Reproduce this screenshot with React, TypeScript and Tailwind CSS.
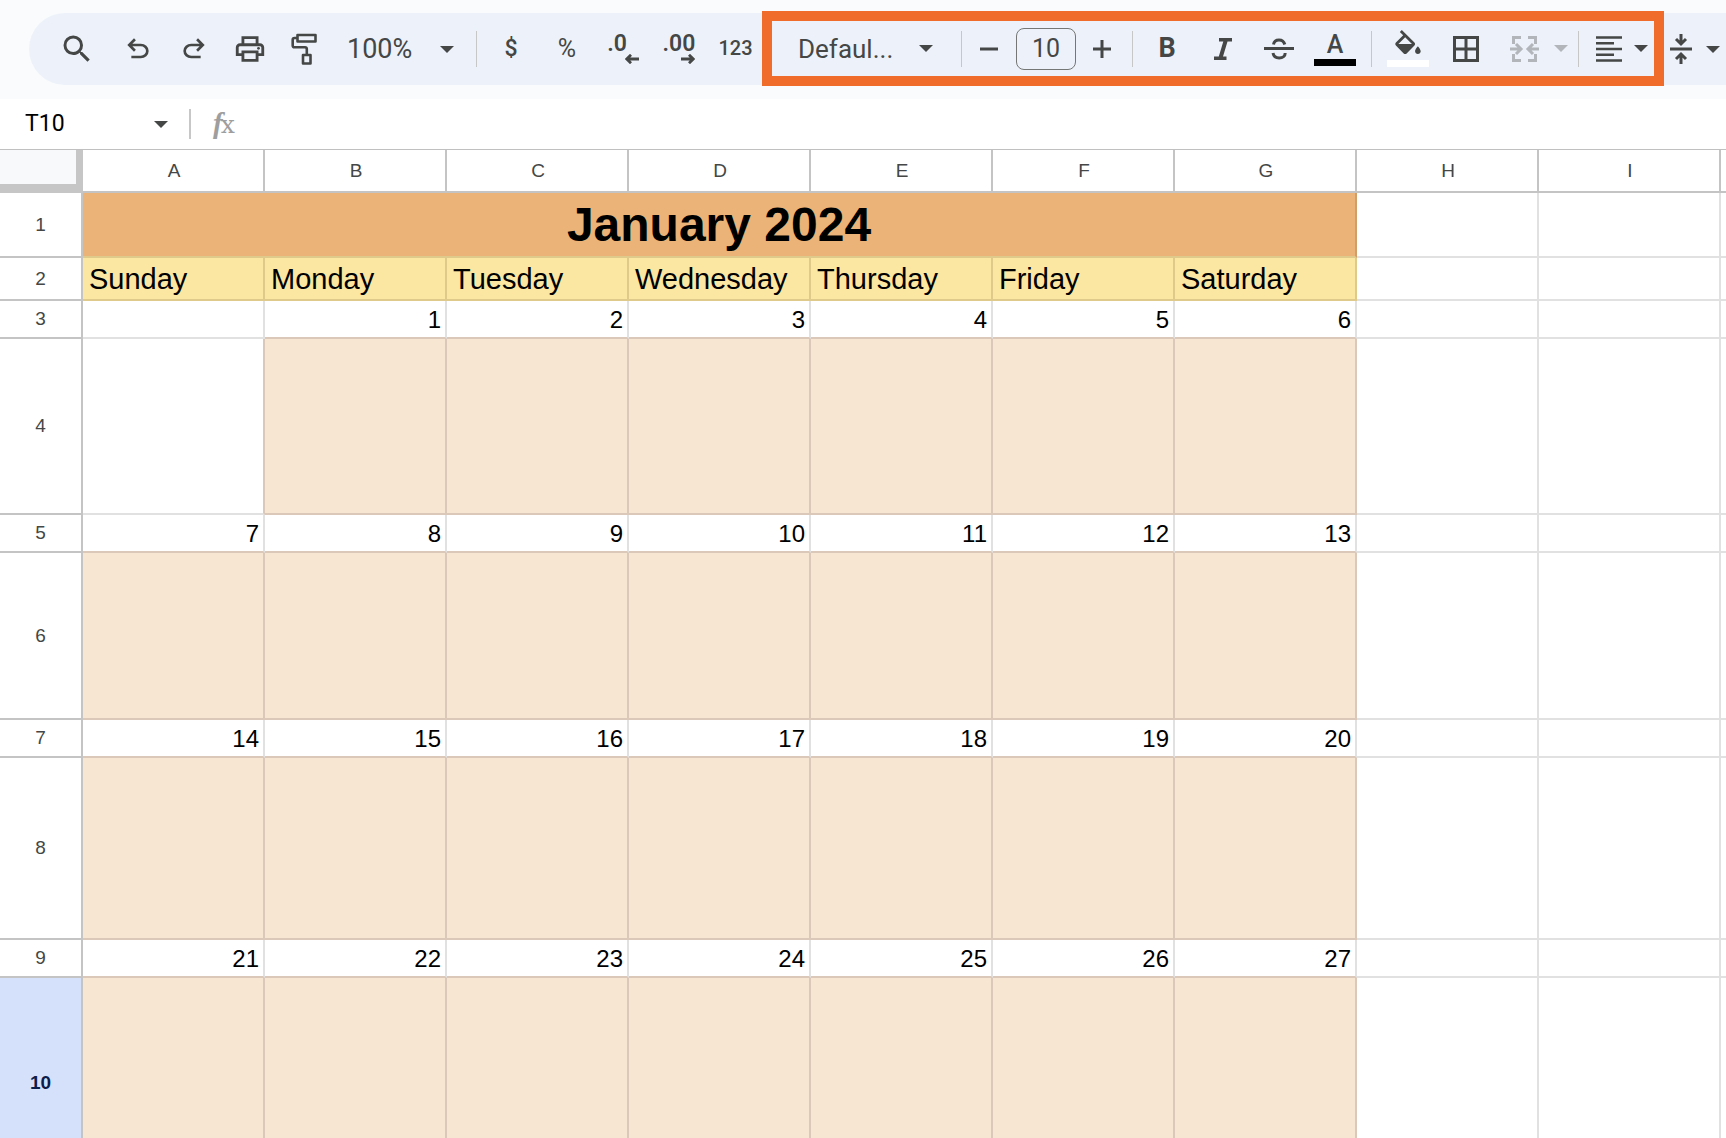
import type { ReactNode } from "react";
import clsx from "clsx";
import { MdSearch, MdOutlinePrint } from "react-icons/md";

const COLUMNS = ["A", "B", "C", "D", "E", "F", "G", "H", "I"];
const DAYS = ["Sunday", "Monday", "Tuesday", "Wednesday", "Thursday", "Friday", "Saturday"];

type Row = {
  id: number;
  height: string;
  firstDay?: number; // number shown in column A, below 1 is left empty
  filled?: boolean;
  startCol?: number;
};

const ROWS: Row[] = [
  { id: 3, height: "h-[38px]", firstDay: 0 },
  { id: 4, height: "h-[176px]", filled: true, startCol: 1 },
  { id: 5, height: "h-[38px]", firstDay: 7 },
  { id: 6, height: "h-[167px]", filled: true },
  { id: 7, height: "h-[38px]", firstDay: 14 },
  { id: 8, height: "h-[182px]", filled: true },
  { id: 9, height: "h-[38px]", firstDay: 21 },
  { id: 10, height: "h-[212px]", filled: true },
];

function Caret({ className }: { className?: string }) {
  return (
    <svg width="14" height="7" viewBox="0 0 14 7" className={clsx("shrink-0", className)}>
      <path d="M0 0h14L7 7z" fill="currentColor" />
    </svg>
  );
}

function Divider({ className }: { className?: string }) {
  return <div className={clsx("h-9 w-px shrink-0 bg-[#c7c7c7]", className)} />;
}

function ToolButton({ label, className = "w-14", children }: { label: string; className?: string; children: ReactNode }) {
  return (
    <button
      type="button"
      aria-label={label}
      className={clsx("flex h-14 shrink-0 items-center justify-center", className)}
    >
      {children}
    </button>
  );
}

function UndoIcon({ className }: { className?: string }) {
  return (
    <svg width="32" height="32" viewBox="0 0 24 24" fill="currentColor" className={className}>
      <path d="M7 19v-2h7.1q1.575 0 2.738-1T18 13.5T16.838 11T14.1 10H7.8l2.6 2.6L9 14L4 9l5-5l1.4 1.4L7.8 8h6.3q2.425 0 4.163 1.575T20 13.5t-1.737 3.925T14.1 19z" />
    </svg>
  );
}

function PaintIcon() {
  return (
    <svg width="26" height="32" viewBox="0 0 26 32" fill="none" stroke="currentColor" strokeWidth="2.6" strokeLinejoin="round">
      <rect x="6.5" y="2" width="18" height="6.5" />
      <path d="M6.5 5H3.5q-1.800 0-1.800 1.800V12.500q0 1.800 1.800 1.800H14q1.800 0 1.800 1.800V22" />
      <rect x="12" y="22" width="7.5" height="8.5" />
    </svg>
  );
}

function DecimalArrow({ right }: { right?: boolean }) {
  return (
    <svg width="14" height="10" viewBox="0 0 14 10" fill="none" stroke="currentColor" strokeWidth="2.8">
      {right ? <path d="M0 5h12M8 .8 12.2 5 8 9.2" /> : <path d="M14 5H2M6 .8 1.800 5 6 9.2" />}
    </svg>
  );
}

function Toolbar() {
  return (
    <div className="flex h-[99px] overflow-hidden bg-[#f9fbfd] pt-[13px] pl-[29px]">
      <div className="flex h-[72px] flex-1 items-center rounded-l-full bg-[#edf2fa] pl-5 font-[Roboto,sans-serif] text-[#444746]">
        <ToolButton label="Search" className="mr-[5px] w-14">
          <MdSearch size={36} />
        </ToolButton>
        <ToolButton label="Undo">
          <UndoIcon />
        </ToolButton>
        <ToolButton label="Redo">
          <UndoIcon className="-scale-x-100" />
        </ToolButton>
        <ToolButton label="Print">
          <MdOutlinePrint size={34} />
        </ToolButton>
        <ToolButton label="Paint format" className="w-14 pr-1">
          <PaintIcon />
        </ToolButton>

        <div className="relative flex w-[142px] shrink-0 items-center pl-[13px]">
          <select aria-label="Zoom" className="w-full appearance-none text-[27px] leading-8 outline-none">
            <option>100%</option>
          </select>
          <Caret className="pointer-events-none absolute right-[22px]" />
        </div>
        <Divider className="mr-1.5" />

        <ToolButton label="Format as currency">
          <span className="text-[23px] font-medium">$</span>
        </ToolButton>
        <ToolButton label="Format as percent">
          <span className="text-[25px]">%</span>
        </ToolButton>
        <ToolButton label="Decrease decimal places">
          <span className="flex flex-col items-end">
            <span className="pr-3 text-[23px] leading-5 font-semibold">.0</span>
            <DecimalArrow />
          </span>
        </ToolButton>
        <ToolButton label="Increase decimal places">
          <span className="flex flex-col items-end">
            <span className="text-[23px] leading-5 font-semibold">.00</span>
            <DecimalArrow right />
          </span>
        </ToolButton>
        <ToolButton label="More formats" className="w-[55px] pb-0.5 pl-0.5">
          <span className="text-[20px] font-medium">123</span>
        </ToolButton>

        <div className="mb-px flex h-[75px] shrink-0 items-center border-10 border-[#ef6c2b]">
          <div className="relative flex w-[189px] shrink-0 items-center pl-[26px]">
            <select aria-label="Font" className="w-full appearance-none text-[26px] leading-8 outline-none">
              <option>Defaul...</option>
            </select>
            <Caret className="pointer-events-none absolute right-[28px]" />
          </div>
          <Divider />
          <ToolButton label="Decrease font size" className="w-[54px]">
            <svg width="18" height="18" viewBox="0 0 18 18" stroke="currentColor" strokeWidth="3">
              <path d="M0 9h18" />
            </svg>
          </ToolButton>
          <input
            aria-label="Font size"
            defaultValue="10"
            className="h-[42px] w-[60px] rounded-lg border border-[#747775] text-center text-[25px] outline-none"
          />
          <ToolButton label="Increase font size" className="mr-1 w-[52px]">
            <svg width="18" height="18" viewBox="0 0 18 18" stroke="currentColor" strokeWidth="3">
              <path d="M0 9h18M9 0v18" />
            </svg>
          </ToolButton>
          <Divider className="mr-1.5" />

          <ToolButton label="Bold">
            <span className="text-[27px] font-bold">B</span>
          </ToolButton>
          <ToolButton label="Italic">
            <svg width="18" height="22" viewBox="0 0 18 22" fill="currentColor">
              <path d="M5 0h13v3.500h-4.500L9 18.500h3.500V22H0v-3.500h4.800L9.300 3.500H5z" />
            </svg>
          </ToolButton>
          <ToolButton label="Strikethrough">
            <svg width="30" height="24" viewBox="0 0 30 24" fill="none" stroke="currentColor" strokeWidth="3">
              <path d="M0 11.500h30M9.500 7.500C10 4.500 12 3 15 3s5 1.500 5.800 4.500M9 16c.6 3.300 3 5 6.200 5 3.500 0 6-1.800 6-5" />
            </svg>
          </ToolButton>
          <ToolButton label="Text color">
            <span className="flex flex-col items-center">
              <span className="text-[25px] leading-7 font-medium">A</span>
              <span className="h-[7px] w-[42px] bg-black" />
            </span>
          </ToolButton>
          <Divider className="mx-2" />

          <ToolButton label="Fill color" className="mr-0.5 w-14">
            <span className="flex flex-col items-center gap-1.5">
              <svg width="26" height="24" viewBox="3 0 18 17" fill="currentColor">
                <path d="M16.560 8.940L7.620 0 6.210 1.410l2.380 2.380-5.150 5.150c-.59.59-.59 1.540 0 2.120l5.500 5.500c.29.29.68.44 1.060.44s.77-.15 1.060-.44l5.500-5.500c.59-.58.59-1.530 0-2.120zM5.210 10L10 5.210 14.790 10H5.210zM19 11.500s-2 2.170-2 3.500c0 1.100.9 2 2 2s2-.9 2-2c0-1.330-2-3.500-2-3.500z" />
              </svg>
              <span className="h-[7px] w-[42px] bg-white" />
            </span>
          </ToolButton>
          <ToolButton label="Borders">
            <svg width="26" height="26" viewBox="0 0 26 26" fill="none" stroke="currentColor" strokeWidth="3">
              <path d="M1.500 1.500h23v23h-23zM13 1.500v23M1.500 13h23" />
            </svg>
          </ToolButton>
          <ToolButton label="Merge cells" className="w-[84px] gap-[15px] pl-[5px] text-[#b2b5b9]">
            <svg width="29" height="26" viewBox="0 0 29 26" fill="none" stroke="currentColor" strokeWidth="3">
              <path d="M11 1.500H3.500V8M3.500 18v6.500H11M18 1.500h7.500V8M25.500 18v6.500H18M0 13h10M6 8l5 5-5 5M29 13H19M23 8l-5 5 5 5" />
            </svg>
            <Caret />
          </ToolButton>
          <Divider />
          <ToolButton label="Horizontal align" className="w-[75px] gap-3 pl-2.5">
            <svg width="26" height="26" viewBox="0 0 26 26" stroke="currentColor" strokeWidth="2.600">
              <path d="M0 1.500h26M0 7.300h18M0 13h26M0 18.800h18M0 24.500h26" />
            </svg>
            <Caret />
          </ToolButton>
        </div>

        <ToolButton label="Vertical align" className="w-[62px] gap-[14px]">
          <svg width="22" height="30" viewBox="0 0 22 30" fill="none" stroke="currentColor" strokeWidth="3">
            <path d="M0 15h22M11 0v9M6 5l5 5 5-5M11 30v-9M6 25l5-5 5 5" />
          </svg>
          <Caret />
        </ToolButton>
      </div>
    </div>
  );
}

function FormulaBar() {
  return (
    <div className="flex h-[50px] items-center bg-white">
      <div className="flex w-[189px] shrink-0 items-center justify-between pr-[21px] pl-[25px]">
        <input
          aria-label="Name box"
          defaultValue="T10"
          className="w-24 font-[Roboto,sans-serif] text-[23px] leading-8 text-black outline-none"
        />
        <button type="button" aria-label="Named ranges" className="text-[#444746]">
          <Caret />
        </button>
      </div>
      <div className="h-[30px] w-0.5 shrink-0 bg-[#c7c7c7]" />
      <label htmlFor="formula" className="flex shrink-0 items-baseline pl-[22px] leading-8 text-[#9e9e9e]">
        <span className="font-['Liberation_Serif',serif] text-[29px] font-bold italic">f</span>
        <span className="-ml-0.5 font-['DejaVu_Serif',serif] text-[25px]">x</span>
      </label>
      <input id="formula" className="ml-4 h-8 flex-1 outline-none" />
    </div>
  );
}

function RowHeader({ id, active }: { id: number; active?: boolean }) {
  return (
    <th
      scope="row"
      className={clsx(
        "border-r-2 border-b-2 border-[#c4c4c4] pt-px text-[19px]",
        active ? "bg-[#d5e0fb] font-bold text-[#0b1d4a]" : "bg-white font-normal text-[#444746]"
      )}
    >
      {id}
    </th>
  );
}

// the unused columns to the right of the calendar
function BlankCells() {
  return (
    <>
      <td className="border-r-2 border-b-2 border-[#e1e1e1]" />
      <td className="border-r-2 border-b-2 border-[#e1e1e1]" />
      <td className="border-b-2 border-[#e1e1e1]" />
    </>
  );
}

function CalendarRow({ row, next }: { row: Row; next?: Row }) {
  return (
    <tr className={row.height}>
      <RowHeader id={row.id} active={row.id === 10} />
      {DAYS.map((day, i) => {
        const start = row.startCol ?? 0;
        const filled = row.filled && i >= start;
        const tintedRight = row.filled && i >= start - 1;
        const tintedBottom = filled || (next?.filled && i >= (next.startCol ?? 0));
        const date = row.firstDay !== undefined ? row.firstDay + i : 0;
        return (
          <td
            key={day}
            className={clsx(
              "border-r-2 border-b-2 pt-0.5 pr-1 text-right text-[24px] leading-7",
              filled && "bg-[#f7e6d2]",
              tintedRight ? "border-r-[#dcc8b8]" : "border-r-[#e1e1e1]",
              tintedBottom ? "border-b-[#dcc8b8]" : "border-b-[#e1e1e1]"
            )}
          >
            {date > 0 ? date : null}
          </td>
        );
      })}
      <BlankCells />
    </tr>
  );
}

function Sheet() {
  return (
    <table className="w-full table-fixed border-separate border-spacing-0 border-t border-[#c0c0c0] font-['Liberation_Sans',Arial,sans-serif] text-black">
      <colgroup>
        <col className="w-[83px]" />
        {COLUMNS.map((c) => (
          <col key={c} className="w-[182px]" />
        ))}
        <col />
      </colgroup>
      <thead>
        <tr className="h-[43px]">
          <td className="border-r-7 border-b-9 border-[#c6c6c6] bg-[#f8f9fb]" />
          {COLUMNS.map((c) => (
            <th
              key={c}
              scope="col"
              className="border-r-2 border-b-2 border-[#c4c4c4] pt-px pl-0.5 text-[19px] font-normal text-[#444746]"
            >
              {c}
            </th>
          ))}
          <td className="border-b-2 border-[#c4c4c4]" />
        </tr>
      </thead>
      <tbody>
        <tr className="h-[65px]">
          <RowHeader id={1} />
          <td
            colSpan={7}
            className="border-r-2 border-b-2 border-r-[#d09e69] border-b-[#dfca8b] bg-[#ebb377] text-center text-[48px] leading-[56px] font-bold"
          >
            January 2024
          </td>
          <BlankCells />
        </tr>
        <tr className="h-[43px]">
          <RowHeader id={2} />
          {DAYS.map((day) => (
            <td key={day} className="border-r-2 border-b-2 border-[#dfca8b] bg-[#fbe6a2] pl-1.5 text-[29px] leading-8">
              {day}
            </td>
          ))}
          <BlankCells />
        </tr>
        {ROWS.map((row, i) => (
          <CalendarRow key={row.id} row={row} next={ROWS[i + 1]} />
        ))}
      </tbody>
    </table>
  );
}

export default function App() {
  return (
    <div className="h-screen overflow-hidden bg-white">
      <Toolbar />
      <FormulaBar />
      <Sheet />
    </div>
  );
}
